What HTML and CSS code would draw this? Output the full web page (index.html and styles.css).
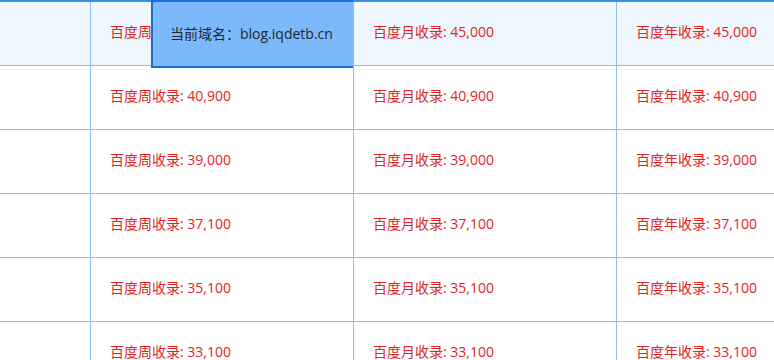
FILE: index.html
```html
<!DOCTYPE html>
<html lang="zh">
<head>
<meta charset="utf-8">
<title>收录</title>
<link rel="stylesheet" href="styles.css">
</head>
<body>
<div class="wrap">
  <div class="table">
    <div class="row head">
      <div class="cell first"></div>
      <div class="cell">百度周收录: 45,000</div>
      <div class="cell">百度月收录: 45,000</div>
      <div class="cell">百度年收录: 45,000</div>
    </div>
    <div class="row">
      <div class="cell first"></div>
      <div class="cell">百度周收录: 40,900</div>
      <div class="cell">百度月收录: 40,900</div>
      <div class="cell">百度年收录: 40,900</div>
    </div>
    <div class="row">
      <div class="cell first"></div>
      <div class="cell">百度周收录: 39,000</div>
      <div class="cell">百度月收录: 39,000</div>
      <div class="cell">百度年收录: 39,000</div>
    </div>
    <div class="row">
      <div class="cell first"></div>
      <div class="cell">百度周收录: 37,100</div>
      <div class="cell">百度月收录: 37,100</div>
      <div class="cell">百度年收录: 37,100</div>
    </div>
    <div class="row">
      <div class="cell first"></div>
      <div class="cell">百度周收录: 35,100</div>
      <div class="cell">百度月收录: 35,100</div>
      <div class="cell">百度年收录: 35,100</div>
    </div>
    <div class="row">
      <div class="cell first"></div>
      <div class="cell">百度周收录: 33,100</div>
      <div class="cell">百度月收录: 33,100</div>
      <div class="cell">百度年收录: 33,100</div>
    </div>
  </div>
  <div class="tip">当前域名：blog.iqdetb.cn</div>
</div>
</body>
</html>
```
FILE: styles.css
```css
html, body {
  margin: 0;
  padding: 0;
  background: #ffffff;
  overflow: hidden;
}
.wrap {
  position: relative;
  width: 774px;
  height: 360px;
  overflow: hidden;
  font-family: "Open Sans", "Noto Sans CJK SC", sans-serif;
  font-size: 14px;
}
.table {
  border-top: 2px solid #3b8fe6;
  width: 900px;
}
.row {
  display: grid;
  grid-template-columns: 91px 263px 263px 283px;
  height: 64px;
  border-bottom: 1px solid #8cbfea;
  box-sizing: border-box;
}
.row.head {
  background: #edf7fd;
}
.cell {
  border-right: 1px solid #8cbfea;
  display: flex;
  align-items: center;
  padding-left: 19px;
  padding-bottom: 3px;
  line-height: 20px;
  color: #e3231f;
  white-space: nowrap;
}
.cell.first {
  padding-left: 0;
}
.tip {
  position: absolute;
  left: 151px;
  top: 0;
  width: 202px;
  height: 68px;
  box-sizing: border-box;
  background: #7cb9fb;
  border: 2px solid #1c6bd8;
  border-right: none;
  display: flex;
  align-items: center;
  padding-left: 17px;
  padding-bottom: 1px;
  line-height: 20px;
  color: #1f2530;
  font-size: 14px;
}
```
